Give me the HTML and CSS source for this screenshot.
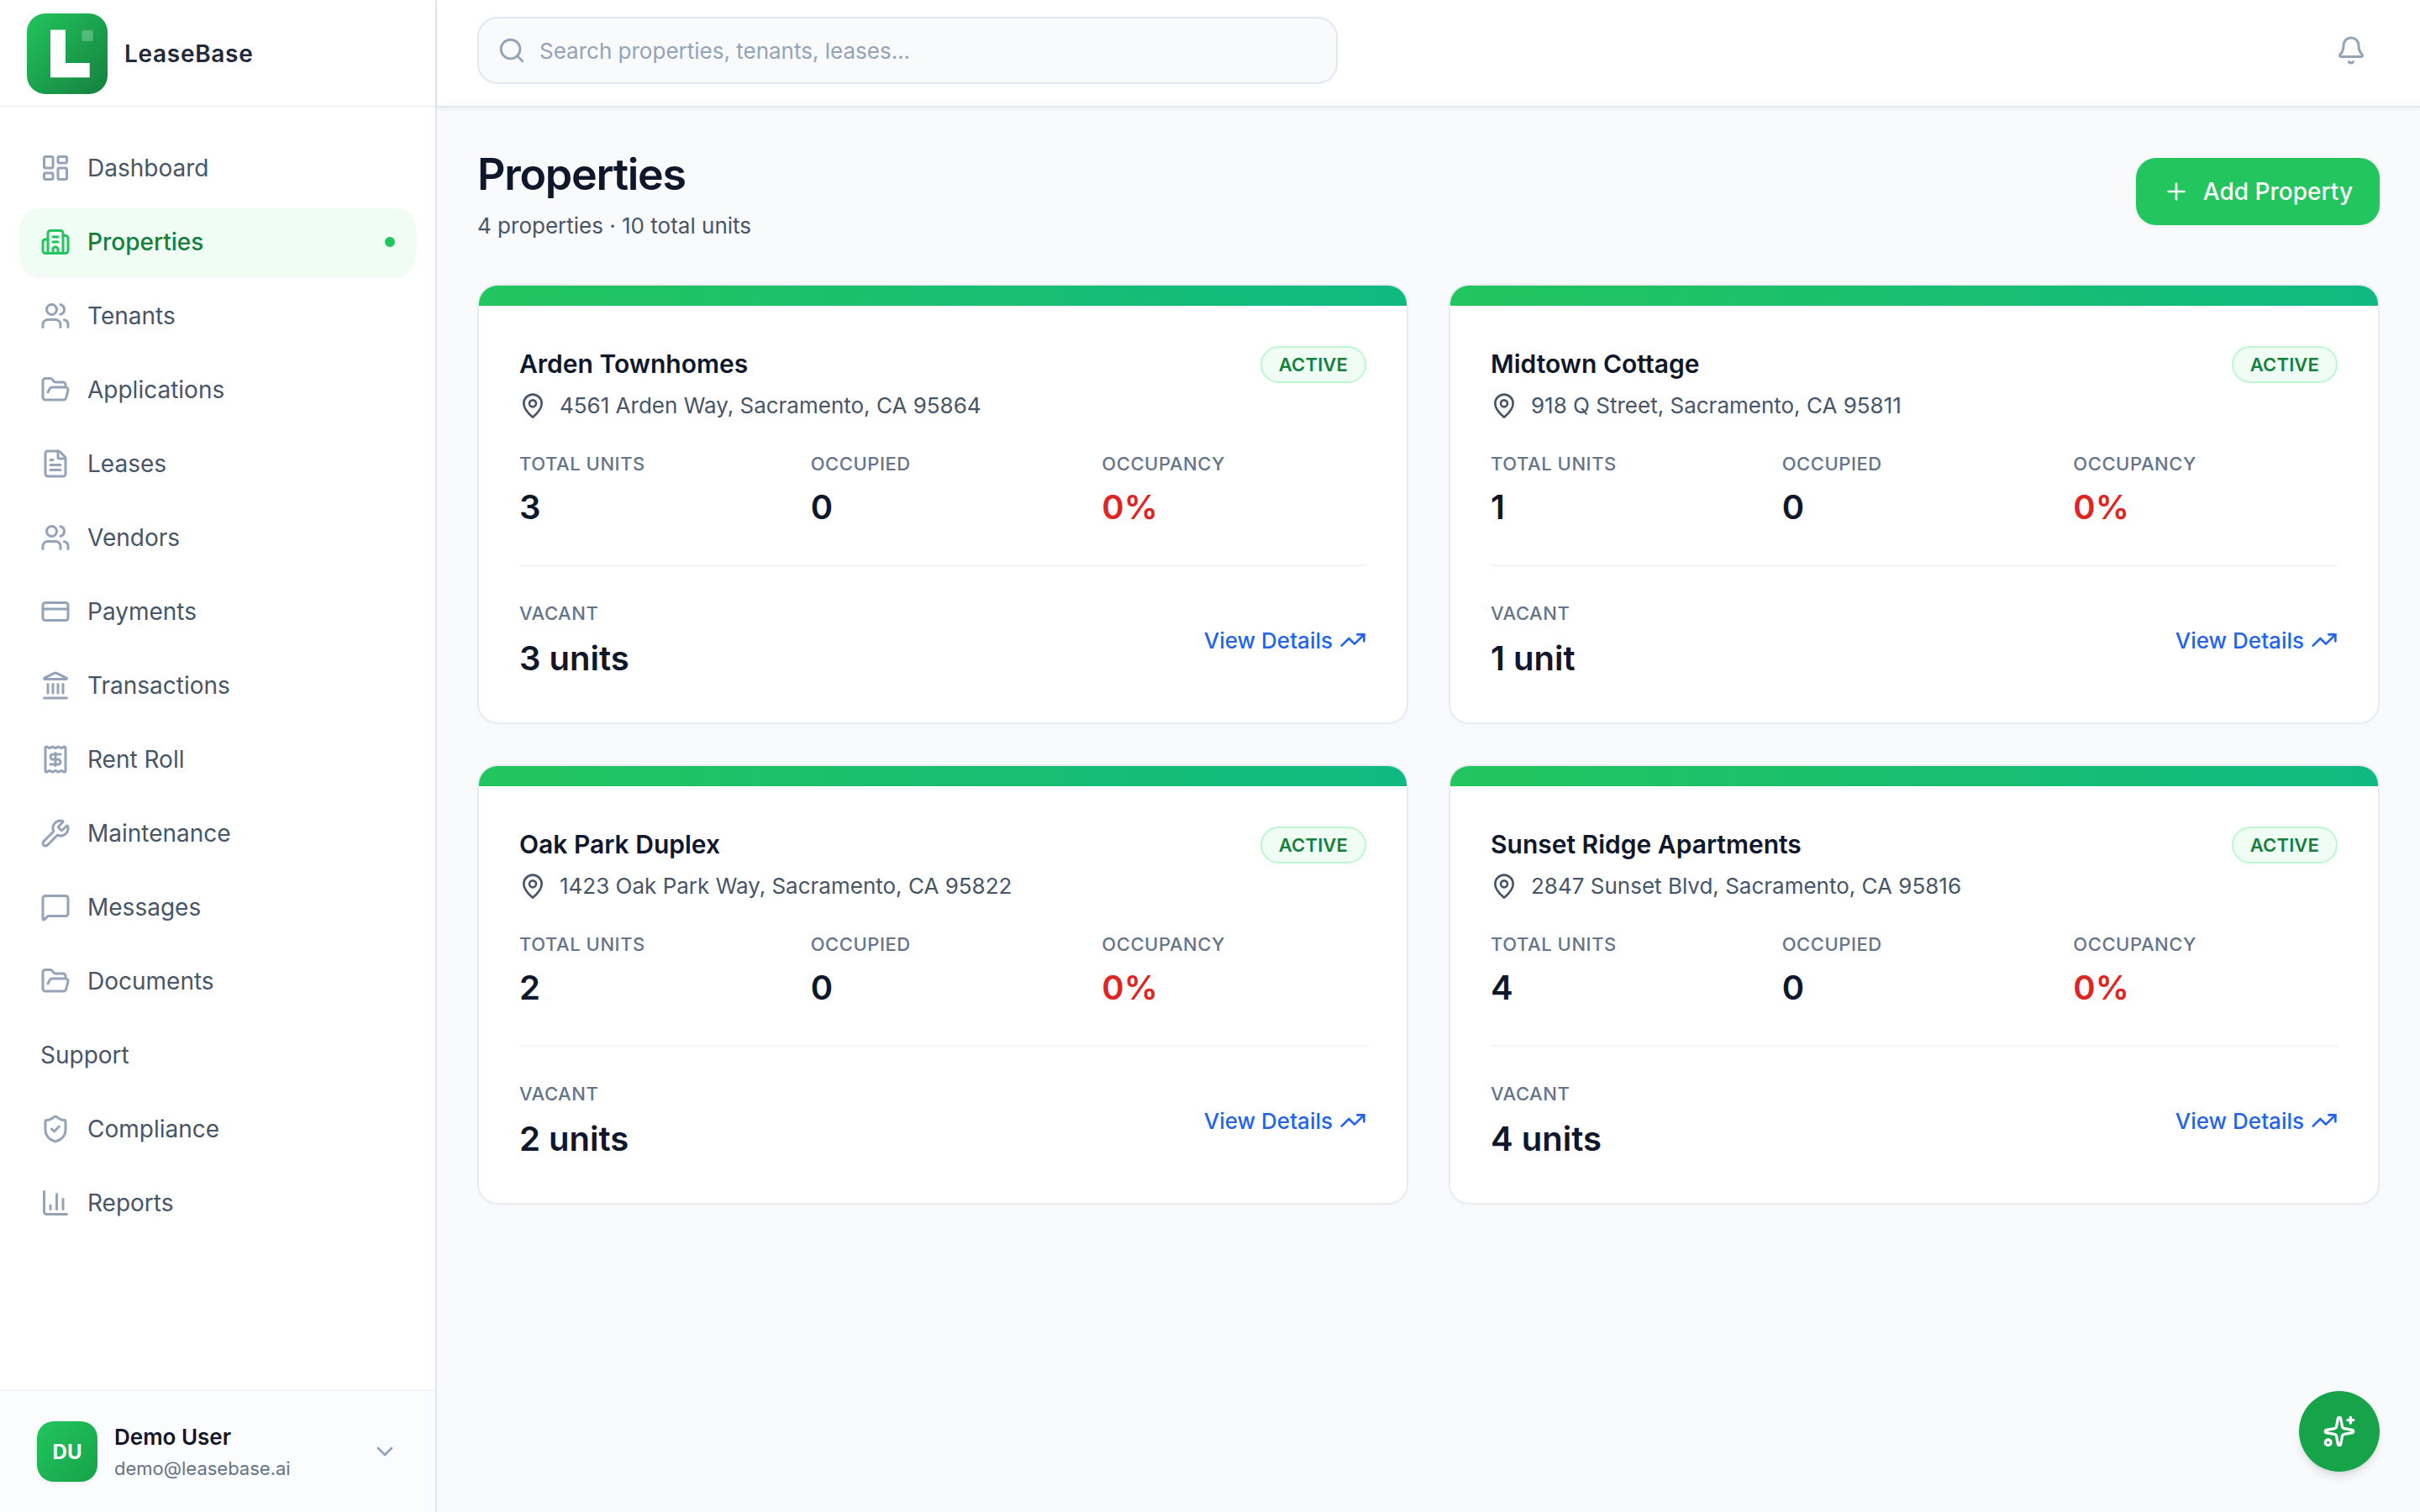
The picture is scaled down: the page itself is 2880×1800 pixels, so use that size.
FILE: index.html
```html
<!DOCTYPE html>
<html lang="en">
<head>
<meta charset="utf-8">
<title>LeaseBase – Properties</title>
<link rel="stylesheet" href="styles.css">
</head>
<body>
<svg class="sprite" aria-hidden="true">
  <symbol id="dashboard" viewBox="0 0 24 24"><rect width="7" height="9" x="3" y="3" rx="1"/><rect width="7" height="5" x="14" y="3" rx="1"/><rect width="7" height="9" x="14" y="12" rx="1"/><rect width="7" height="5" x="3" y="16" rx="1"/></symbol>
  <symbol id="building" viewBox="0 0 24 24"><path d="M10 12h4"/><path d="M10 8h4"/><path d="M14 21v-3a2 2 0 0 0-4 0v3"/><path d="M6 10H4a2 2 0 0 0-2 2v7a2 2 0 0 0 2 2h16a2 2 0 0 0 2-2V9a2 2 0 0 0-2-2h-2"/><path d="M6 21V5a2 2 0 0 1 2-2h8a2 2 0 0 1 2 2v16"/></symbol>
  <symbol id="users" viewBox="0 0 24 24"><path d="M16 21v-2a4 4 0 0 0-4-4H6a4 4 0 0 0-4 4v2"/><path d="M16 3.128a4 4 0 0 1 0 7.744"/><path d="M22 21v-2a4 4 0 0 0-3-3.87"/><circle cx="9" cy="7" r="4"/></symbol>
  <symbol id="folder" viewBox="0 0 24 24"><path d="m6 14 1.5-2.9A2 2 0 0 1 9.24 10H20a2 2 0 0 1 1.94 2.5l-1.54 6a2 2 0 0 1-1.95 1.5H4a2 2 0 0 1-2-2V5a2 2 0 0 1 2-2h3.9a2 2 0 0 1 1.69.9l.81 1.2a2 2 0 0 0 1.67.9H18a2 2 0 0 1 2 2v2"/></symbol>
  <symbol id="file" viewBox="0 0 24 24"><path d="M6 22a2 2 0 0 1-2-2V4a2 2 0 0 1 2-2h8a2.4 2.4 0 0 1 1.704.706l3.588 3.588A2.4 2.4 0 0 1 20 8v12a2 2 0 0 1-2 2z"/><path d="M14 2v5a1 1 0 0 0 1 1h5"/><path d="M10 9H8"/><path d="M16 13H8"/><path d="M16 17H8"/></symbol>
  <symbol id="card" viewBox="0 0 24 24"><rect width="20" height="14" x="2" y="5" rx="2"/><path d="M2 10h20"/></symbol>
  <symbol id="landmark" viewBox="0 0 24 24"><path d="M10 18v-7"/><path d="M11.119 2.205a2 2 0 0 1 1.762 0l7.84 3.846A.5.5 0 0 1 20.5 7h-17a.5.5 0 0 1-.22-.949z"/><path d="M14 18v-7"/><path d="M18 18v-7"/><path d="M3 22h18"/><path d="M6 18v-7"/></symbol>
  <symbol id="receipt" viewBox="0 0 24 24"><path d="M12 17V7"/><path d="M16 8h-6a2 2 0 0 0 0 4h4a2 2 0 0 1 0 4H8"/><path d="M4 3a1 1 0 0 1 1-1 1.3 1.3 0 0 1 .7.2l.933.6a1.3 1.3 0 0 0 1.4 0l.934-.6a1.3 1.3 0 0 1 1.4 0l.933.6a1.3 1.3 0 0 0 1.4 0l.933-.6a1.3 1.3 0 0 1 1.4 0l.934.6a1.3 1.3 0 0 0 1.4 0l.933-.6A1.3 1.3 0 0 1 19 2a1 1 0 0 1 1 1v18a1 1 0 0 1-1 1 1.3 1.3 0 0 1-.7-.2l-.933-.6a1.3 1.3 0 0 0-1.4 0l-.934.6a1.3 1.3 0 0 1-1.4 0l-.933-.6a1.3 1.3 0 0 0-1.4 0l-.933.6a1.3 1.3 0 0 1-1.4 0l-.934-.6a1.3 1.3 0 0 0-1.4 0l-.933.6a1.3 1.3 0 0 1-.7.2 1 1 0 0 1-1-1z"/></symbol>
  <symbol id="wrench" viewBox="0 0 24 24"><path d="M14.7 6.3a1 1 0 0 0 0 1.4l1.6 1.6a1 1 0 0 0 1.4 0l3.106-3.105c.32-.322.863-.22.983.218a6 6 0 0 1-8.259 7.057l-7.91 7.91a1 1 0 0 1-2.999-3l7.91-7.91a6 6 0 0 1 7.057-8.259c.438.12.54.662.219.984z"/></symbol>
  <symbol id="message" viewBox="0 0 24 24"><path d="M22 17a2 2 0 0 1-2 2H6.828a2 2 0 0 0-1.414.586l-2.202 2.202A.71.71 0 0 1 2 21.286V5a2 2 0 0 1 2-2h16a2 2 0 0 1 2 2z"/></symbol>
  <symbol id="shield" viewBox="0 0 24 24"><path d="M20 13c0 5-3.5 7.5-7.66 8.95a1 1 0 0 1-.67-.01C7.5 20.5 4 18 4 13V6a1 1 0 0 1 1-1c2 0 4.5-1.2 6.24-2.72a1.17 1.17 0 0 1 1.52 0C14.51 3.81 17 5 19 5a1 1 0 0 1 1 1z"/><path d="m9 12 2 2 4-4"/></symbol>
  <symbol id="chart" viewBox="0 0 24 24"><path d="M3 3v16a2 2 0 0 0 2 2h16"/><path d="M18 17V9"/><path d="M13 17V5"/><path d="M8 17v-3"/></symbol>
  <symbol id="chevron" viewBox="0 0 24 24"><path d="m6 9 6 6 6-6"/></symbol>
  <symbol id="search" viewBox="0 0 24 24"><path d="m21 21-4.34-4.34"/><circle cx="11" cy="11" r="8"/></symbol>
  <symbol id="bell" viewBox="0 0 24 24"><path d="M10.268 21a2 2 0 0 0 3.464 0"/><path d="M3.262 15.326A1 1 0 0 0 4 17h16a1 1 0 0 0 .74-1.673C19.41 13.956 18 12.499 18 8A6 6 0 0 0 6 8c0 4.499-1.411 5.956-2.738 7.326"/></symbol>
  <symbol id="plus" viewBox="0 0 24 24"><path d="M5 12h14"/><path d="M12 5v14"/></symbol>
  <symbol id="pin" viewBox="0 0 24 24"><path d="M20 10c0 4.993-5.539 10.193-7.399 11.799a1 1 0 0 1-1.202 0C9.539 20.193 4 14.993 4 10a8 8 0 0 1 16 0"/><circle cx="12" cy="10" r="3"/></symbol>
  <symbol id="trend" viewBox="0 0 24 24"><path d="M16 7h6v6"/><path d="m22 7-8.5 8.5-5-5L2 17"/></symbol>
  <symbol id="sparkles" viewBox="0 0 24 24"><path d="M11.017 2.814a1 1 0 0 1 1.966 0l1.051 5.558a2 2 0 0 0 1.594 1.594l5.558 1.051a1 1 0 0 1 0 1.966l-5.558 1.051a2 2 0 0 0-1.594 1.594l-1.051 5.558a1 1 0 0 1-1.966 0l-1.051-5.558a2 2 0 0 0-1.594-1.594l-5.558-1.051a1 1 0 0 1 0-1.966l5.558-1.051a2 2 0 0 0 1.594-1.594z"/><path d="M20 2v4"/><path d="M22 4h-4"/><circle cx="4" cy="20" r="2"/></symbol>
</svg>

<div class="app">
  <aside class="sidebar">
    <div class="brand">
      <svg class="logo" viewBox="0 0 96 96">
        <defs><linearGradient id="logo-fill" x1="0" y1="0" x2="1" y2="1"><stop offset="0" stop-color="#22c55e"/><stop offset="1" stop-color="#15803d"/></linearGradient></defs>
        <rect width="96" height="96" rx="22" fill="url(#logo-fill)"/>
        <path d="M28 19.5H46V59H74.7V76.3H28Z" fill="#fff"/>
        <rect x="65.5" y="20" width="13.2" height="13" rx="1.5" fill="#fff" fill-opacity=".25"/>
      </svg>
      <span class="brand-name">LeaseBase</span>
    </div>
    <nav class="nav">
      <a class="nav-item"><svg class="icon"><use href="#dashboard"/></svg>Dashboard</a>
      <a class="nav-item active"><svg class="icon"><use href="#building"/></svg>Properties<span class="dot"></span></a>
      <a class="nav-item"><svg class="icon"><use href="#users"/></svg>Tenants</a>
      <a class="nav-item"><svg class="icon"><use href="#folder"/></svg>Applications</a>
      <a class="nav-item"><svg class="icon"><use href="#file"/></svg>Leases</a>
      <a class="nav-item"><svg class="icon"><use href="#users"/></svg>Vendors</a>
      <a class="nav-item"><svg class="icon"><use href="#card"/></svg>Payments</a>
      <a class="nav-item"><svg class="icon"><use href="#landmark"/></svg>Transactions</a>
      <a class="nav-item"><svg class="icon"><use href="#receipt"/></svg>Rent Roll</a>
      <a class="nav-item"><svg class="icon"><use href="#wrench"/></svg>Maintenance</a>
      <a class="nav-item"><svg class="icon"><use href="#message"/></svg>Messages</a>
      <a class="nav-item"><svg class="icon"><use href="#folder"/></svg>Documents</a>
      <a class="nav-item">Support</a>
      <a class="nav-item"><svg class="icon"><use href="#shield"/></svg>Compliance</a>
      <a class="nav-item"><svg class="icon"><use href="#chart"/></svg>Reports</a>
    </nav>
    <div class="account">
      <div class="account-button">
        <div class="avatar">DU</div>
        <div class="account-text"><div class="account-name">Demo User</div><div class="account-mail">demo@leasebase.ai</div></div>
        <svg class="icon small"><use href="#chevron"/></svg>
      </div>
    </div>
  </aside>

  <div class="page">
    <header class="topbar">
      <div class="search"><svg class="icon"><use href="#search"/></svg><span>Search properties, tenants, leases...</span></div>
      <div class="bell"><svg class="icon"><use href="#bell"/></svg></div>
    </header>
    <main class="main">
      <div class="heading">
        <div><h1 class="title">Properties</h1><p class="subtitle">4 properties · 10 total units</p></div>
        <button class="add"><svg class="icon small"><use href="#plus"/></svg>Add Property</button>
      </div>
      <div class="grid">
        <article class="property">
          <div class="band"></div>
          <div class="body">
            <div class="top"><h2 class="name">Arden Townhomes</h2><span class="badge">ACTIVE</span></div>
            <div class="address"><svg class="icon small"><use href="#pin"/></svg>4561 Arden Way, Sacramento, CA 95864</div>
            <div class="stats">
              <div><div class="label">TOTAL UNITS</div><div class="value">3</div></div>
              <div><div class="label">OCCUPIED</div><div class="value">0</div></div>
              <div><div class="label">OCCUPANCY</div><div class="value low">0%</div></div>
            </div>
            <div class="bottom">
              <div><div class="label">VACANT</div><div class="value vacant">3 units</div></div>
              <a class="details">View Details<svg class="icon small"><use href="#trend"/></svg></a>
            </div>
          </div>
        </article>
        <article class="property">
          <div class="band"></div>
          <div class="body">
            <div class="top"><h2 class="name">Midtown Cottage</h2><span class="badge">ACTIVE</span></div>
            <div class="address"><svg class="icon small"><use href="#pin"/></svg>918 Q Street, Sacramento, CA 95811</div>
            <div class="stats">
              <div><div class="label">TOTAL UNITS</div><div class="value">1</div></div>
              <div><div class="label">OCCUPIED</div><div class="value">0</div></div>
              <div><div class="label">OCCUPANCY</div><div class="value low">0%</div></div>
            </div>
            <div class="bottom">
              <div><div class="label">VACANT</div><div class="value vacant">1 unit</div></div>
              <a class="details">View Details<svg class="icon small"><use href="#trend"/></svg></a>
            </div>
          </div>
        </article>
        <article class="property">
          <div class="band"></div>
          <div class="body">
            <div class="top"><h2 class="name">Oak Park Duplex</h2><span class="badge">ACTIVE</span></div>
            <div class="address"><svg class="icon small"><use href="#pin"/></svg>1423 Oak Park Way, Sacramento, CA 95822</div>
            <div class="stats">
              <div><div class="label">TOTAL UNITS</div><div class="value">2</div></div>
              <div><div class="label">OCCUPIED</div><div class="value">0</div></div>
              <div><div class="label">OCCUPANCY</div><div class="value low">0%</div></div>
            </div>
            <div class="bottom">
              <div><div class="label">VACANT</div><div class="value vacant">2 units</div></div>
              <a class="details">View Details<svg class="icon small"><use href="#trend"/></svg></a>
            </div>
          </div>
        </article>
        <article class="property">
          <div class="band"></div>
          <div class="body">
            <div class="top"><h2 class="name">Sunset Ridge Apartments</h2><span class="badge">ACTIVE</span></div>
            <div class="address"><svg class="icon small"><use href="#pin"/></svg>2847 Sunset Blvd, Sacramento, CA 95816</div>
            <div class="stats">
              <div><div class="label">TOTAL UNITS</div><div class="value">4</div></div>
              <div><div class="label">OCCUPIED</div><div class="value">0</div></div>
              <div><div class="label">OCCUPANCY</div><div class="value low">0%</div></div>
            </div>
            <div class="bottom">
              <div><div class="label">VACANT</div><div class="value vacant">4 units</div></div>
              <a class="details">View Details<svg class="icon small"><use href="#trend"/></svg></a>
            </div>
          </div>
        </article>
      </div>
    </main>
  </div>
</div>
<button class="assistant"><svg class="icon large"><use href="#sparkles"/></svg></button>
</body>
</html>
```
FILE: styles.css
```css
* { box-sizing: border-box; }
body { margin: 0; font-family: "Inter", sans-serif; color: #0f172a; background: #f8fafc; }
h1, h2, p { margin: 0; }
button { border: 0; font-family: inherit; }
.sprite { position: absolute; width: 0; height: 0; }

.icon { width: 36px; height: 36px; flex: none; fill: none; stroke: currentColor; stroke-width: 2; stroke-linecap: round; stroke-linejoin: round; }
.icon.small { width: 32px; height: 32px; }
.icon.large { width: 40px; height: 40px; }

.app { display: flex; height: 1800px; }

/* Sidebar */
.sidebar { width: 520px; flex: none; display: flex; flex-direction: column; background: #fff; border-right: 2px solid #e2e8f0; }
.brand { height: 128px; display: flex; align-items: center; gap: 20px; padding: 2px 32px 0; border-bottom: 2px solid #f1f5f9; }
.logo { width: 96px; height: 96px; }
.brand-name { font-size: 28px; font-weight: 600; letter-spacing: .7px; color: #1e293b; }
.nav { flex: 1; display: flex; flex-direction: column; gap: 8px; padding: 32px 24px; }
.nav-item { display: flex; align-items: center; gap: 20px; height: 80px; padding: 0 24px; border-radius: 24px; font-size: 28px; color: #475569; }
.nav-item .icon { color: #94a3b8; }
.nav-item.active { background: #f0fdf4; color: #15803d; font-weight: 500; box-shadow: 0 2px 4px rgba(0, 0, 0, .05); }
.nav-item.active .icon { color: #22c55e; }
.dot { width: 12px; height: 12px; margin-left: auto; border-radius: 50%; background: #22c55e; }
.account { padding: 24px; border-top: 2px solid #f1f5f9; background: #fbfcfd; }
.account-button { display: flex; align-items: center; gap: 20px; height: 96px; padding: 0 20px; color: #94a3b8; }
.avatar { display: grid; place-items: center; width: 72px; height: 72px; border-radius: 20px; background: linear-gradient(135deg, #22c55e, #16a34a); box-shadow: 0 2px 4px rgba(0, 0, 0, .05); color: #fff; font-size: 24px; font-weight: 700; }
.account-text { flex: 1; padding-top: 2px; }
.account-name { font-size: 26px; line-height: 38px; font-weight: 600; color: #0f172a; }
.account-mail { font-size: 22px; line-height: 36px; color: #64748b; }

/* Page */
.page { flex: 1; display: flex; flex-direction: column; }
.topbar { height: 128px; display: flex; align-items: flex-start; justify-content: space-between; padding: 20px 48px 0; background: #fff; border-bottom: 2px solid #e2e8f0; box-shadow: 0 2px 4px rgba(0, 0, 0, .05); }
.search { display: flex; align-items: center; gap: 16px; width: 1024px; height: 80px; padding: 0 22px; border: 2px solid #e2e8f0; border-radius: 24px; background: #f8fafc; color: #94a3b8; font-size: 26px; }
.search .icon { width: 34px; height: 34px; }
.bell { padding: 22px 16px; color: #94a3b8; }
.bell .icon { display: block; }
.main { padding: 48px; }
.heading { display: flex; justify-content: space-between; height: 162px; }
.title { font-size: 52px; line-height: 64px; font-weight: 600; letter-spacing: -1.3px; }
.subtitle { margin-top: 9px; font-size: 26px; line-height: 40px; color: #475569; }
.add { display: flex; align-items: center; gap: 16px; height: 80px; margin-top: 12px; padding: 0 32px; border-radius: 24px; background: #22c55e; color: #fff; font-size: 28px; font-weight: 500; box-shadow: 0 2px 4px rgba(0, 0, 0, .05); }

/* Property cards */
.grid { display: grid; grid-template-columns: 1fr 1fr; gap: 48px; }
.property { height: 524px; overflow: hidden; border: 2px solid #e8ecf2; border-radius: 24px; background: #fff; box-shadow: 0 2px 4px rgba(0, 0, 0, .015); }
.band { height: 24px; background: linear-gradient(90deg, #22c55e, #10b981); }
.body { padding: 48px; }
.top { display: flex; justify-content: space-between; height: 42px; }
.name { font-size: 30px; line-height: 42px; font-weight: 600; }
.badge { height: 44px; padding: 0 20px; border: 2px solid #bbf7d0; border-radius: 22px; background: #f0fdf4; color: #15803d; font-size: 22px; line-height: 40px; font-weight: 600; letter-spacing: .15px; }
.address { display: flex; align-items: center; gap: 16px; margin-top: 9px; font-size: 26px; line-height: 40px; color: #475569; }
.stats { display: grid; grid-template-columns: repeat(3, 1fr); gap: 32px; margin-top: 33px; padding-bottom: 40px; border-bottom: 2px solid #f1f5f9; }
.label { font-size: 22px; line-height: 32px; font-weight: 500; letter-spacing: .55px; color: #64748b; }
.value { margin-top: 8px; font-size: 40px; line-height: 56px; font-weight: 600; }
.value.low { color: #dc2626; }
.value.vacant { margin-top: 10px; }
.bottom { display: flex; align-items: center; justify-content: space-between; padding-top: 40px; }
.details { display: flex; align-items: center; gap: 8px; margin-bottom: 2px; font-size: 26px; font-weight: 500; color: #2563eb; }

.assistant { position: fixed; right: 48px; bottom: 48px; display: grid; place-items: center; width: 96px; height: 96px; padding: 0; border-radius: 50%; background: #16a34a; color: #fff; box-shadow: 0 8px 12px -2px rgba(0, 0, 0, .1), 0 4px 8px -4px rgba(0, 0, 0, .1); }
```
